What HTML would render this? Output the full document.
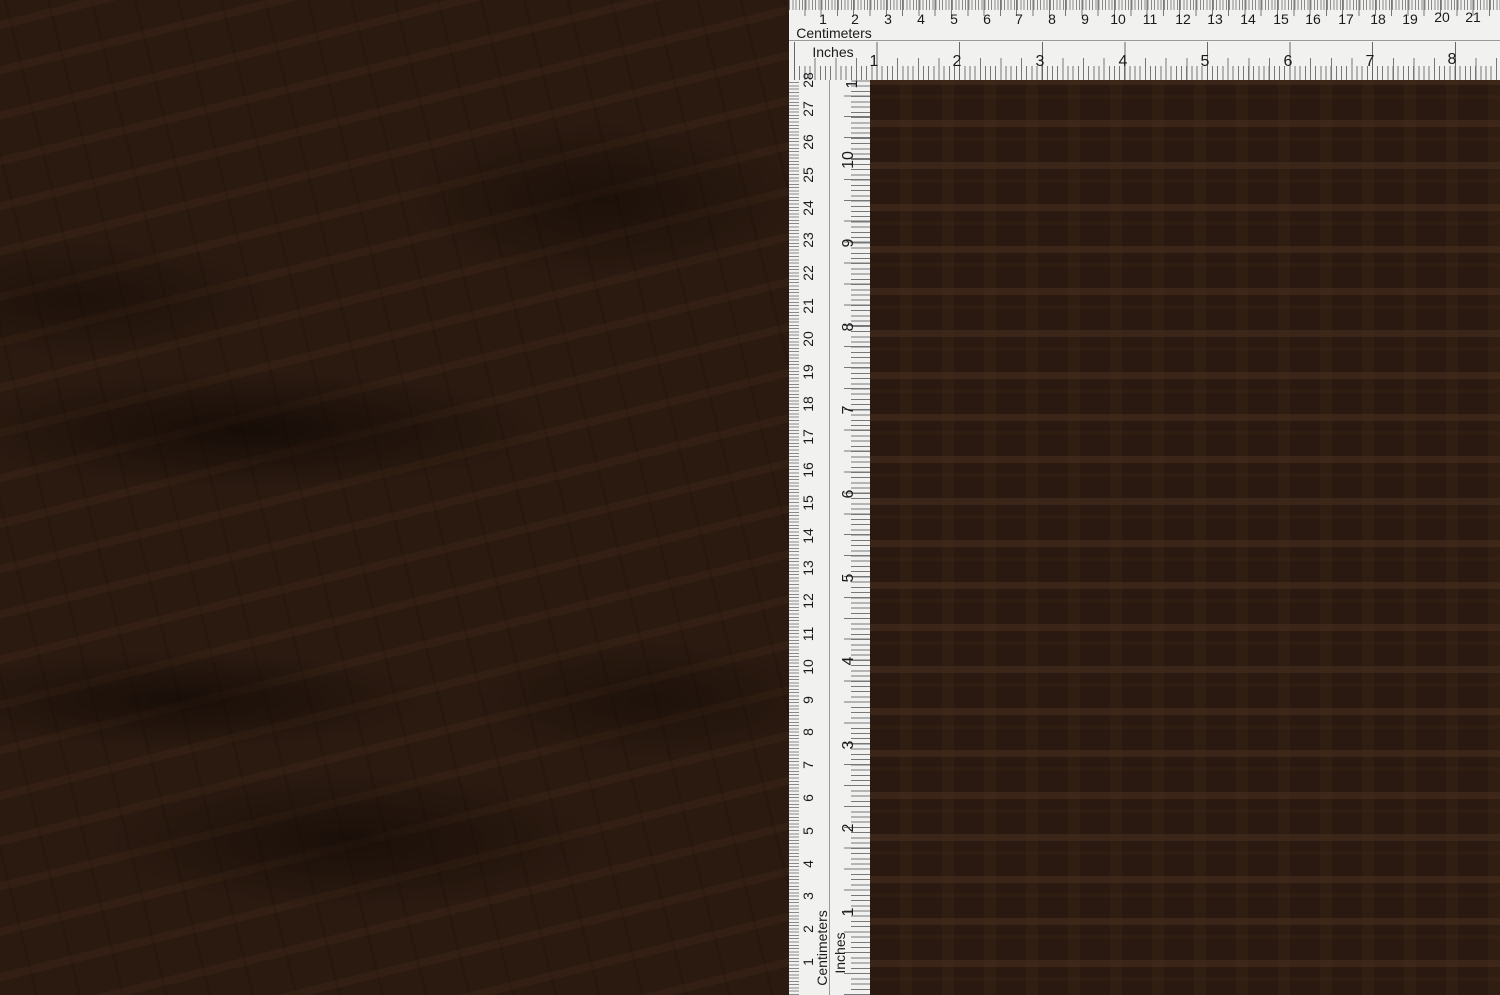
<!DOCTYPE html>
<html><head><meta charset="utf-8">
<style>
*{margin:0;padding:0;box-sizing:border-box}
html,body{width:1500px;height:995px;overflow:hidden;background:#2a1a10;font-family:"Liberation Sans",sans-serif}
#left{position:absolute;left:0;top:0;width:789px;height:995px;
background:
radial-gradient(ellipse 300px 60px at 250px 430px,rgba(10,5,2,.6),transparent),
radial-gradient(ellipse 250px 50px at 180px 700px,rgba(10,5,2,.55),transparent),
radial-gradient(ellipse 200px 80px at 600px 200px,rgba(10,5,2,.45),transparent),
radial-gradient(ellipse 250px 70px at 350px 840px,rgba(10,5,2,.5),transparent),
radial-gradient(ellipse 180px 60px at 650px 700px,rgba(10,5,2,.4),transparent),
radial-gradient(ellipse 200px 60px at 80px 300px,rgba(10,5,2,.4),transparent),
repeating-linear-gradient(-14deg,transparent 0 28px,rgba(80,50,30,.22) 28px 36px,transparent 36px 44px),
repeating-linear-gradient(76deg,transparent 0 34px,rgba(15,8,4,.15) 34px 37px,transparent 37px 42px),
#2b1a10}
#right{position:absolute;left:870px;top:80px;width:630px;height:915px;
background:
repeating-linear-gradient(90deg,transparent 0 30px,rgba(70,45,28,.25) 30px 42px),
repeating-linear-gradient(0deg,#2a1910 0 28px,#3a2518 28px 35px,#2a1910 35px 42px)}
#right:after{content:"";position:absolute;inset:0;background:repeating-linear-gradient(0deg,transparent 0 14px,rgba(60,38,24,.3) 14px 18px,transparent 18px 42px)}
.ruler{position:absolute;background:#f1f1f0}
#top{left:789px;top:0;width:711px;height:80px}
#vert{left:789px;top:80px;width:81px;height:915px}
.tick{position:absolute}
.l{position:absolute;font-size:16px;color:#1a1a1a;transform:translate(-50%,-50%);white-space:nowrap;line-height:1}
.s{font-size:14px}
.rv{transform:translate(-50%,-50%) rotate(-90deg)}
</style></head><body>
<div id="left"></div>
<div id="right"></div>
<div class="ruler" id="top">
 <div class="tick" style="left:0;top:0;width:711px;height:10px;background:repeating-linear-gradient(90deg,#8a8a8a 0 1px,transparent 1px 3.26px)"></div>
 <div class="tick" style="left:0;top:0;width:711px;height:16px;background:repeating-linear-gradient(90deg,transparent 0 15.3px,#777 15.3px 16.3px,transparent 16.3px 16.3px)"></div>
 <div class="tick" style="left:0;top:40px;width:711px;height:1px;background:#999"></div>
 <div class="tick" style="left:5px;top:66px;width:706px;height:14px;background:repeating-linear-gradient(90deg,#777 0 1px,transparent 1px 5.16px)"></div>
 <div class="tick" style="left:5px;top:58px;width:706px;height:22px;background:repeating-linear-gradient(90deg,#777 0 1px,transparent 1px 20.65px)"></div>
 <div class="tick" style="left:5px;top:42px;width:706px;height:38px;background:repeating-linear-gradient(90deg,#666 0 1px,transparent 1px 82.6px)"></div>
 <div class="l s" style="left:34px;top:19px">1</div><div class="l s" style="left:66px;top:19px">2</div><div class="l s" style="left:99px;top:19px">3</div><div class="l s" style="left:132px;top:19px">4</div><div class="l s" style="left:165px;top:19px">5</div><div class="l s" style="left:198px;top:19px">6</div><div class="l s" style="left:230px;top:19px">7</div><div class="l s" style="left:263px;top:19px">8</div><div class="l s" style="left:296px;top:19px">9</div><div class="l s" style="left:329px;top:19px">10</div><div class="l s" style="left:361px;top:19px">11</div><div class="l s" style="left:394px;top:19px">12</div><div class="l s" style="left:426px;top:19px">13</div><div class="l s" style="left:459px;top:19px">14</div><div class="l s" style="left:492px;top:19px">15</div><div class="l s" style="left:524px;top:19px">16</div><div class="l s" style="left:557px;top:19px">17</div><div class="l s" style="left:589px;top:19px">18</div><div class="l s" style="left:621px;top:19px">19</div><div class="l s" style="left:653px;top:17px">20</div><div class="l s" style="left:684px;top:17px">21</div>
 <div class="l s" style="left:45px;top:33px">Centimeters</div>
 <div class="l s" style="left:44px;top:52px">Inches</div>
 <div class="l" style="left:85px;top:62px">1</div><div class="l" style="left:168px;top:62px">2</div><div class="l" style="left:251px;top:62px">3</div><div class="l" style="left:334px;top:62px">4</div><div class="l" style="left:416px;top:62px">5</div><div class="l" style="left:499px;top:62px">6</div><div class="l" style="left:581px;top:62px">7</div><div class="l" style="left:663px;top:60px">8</div>
</div>
<div class="ruler" id="vert">
 <div class="tick" style="left:0;top:0;width:10px;height:915px;background:repeating-linear-gradient(0deg,#8a8a8a 0 1px,transparent 1px 3.28px)"></div>
 <div class="tick" style="left:40px;top:0;width:1px;height:915px;background:#999"></div>
 <div class="tick" style="left:62px;top:0;width:19px;height:915px;background:repeating-linear-gradient(0deg,#777 0 1px,transparent 1px 5.22px)"></div>
 <div class="tick" style="left:55px;top:0;width:26px;height:915px;background:repeating-linear-gradient(0deg,#777 0 1px,transparent 1px 20.9px)"></div>
 <div class="l s rv" style="left:19px;top:882px">1</div><div class="l s rv" style="left:19px;top:849px">2</div><div class="l s rv" style="left:19px;top:816px">3</div><div class="l s rv" style="left:19px;top:784px">4</div><div class="l s rv" style="left:19px;top:751px">5</div><div class="l s rv" style="left:19px;top:718px">6</div><div class="l s rv" style="left:19px;top:685px">7</div><div class="l s rv" style="left:19px;top:652px">8</div><div class="l s rv" style="left:19px;top:620px">9</div><div class="l s rv" style="left:19px;top:587px">10</div><div class="l s rv" style="left:19px;top:554px">11</div><div class="l s rv" style="left:19px;top:521px">12</div><div class="l s rv" style="left:19px;top:488px">13</div><div class="l s rv" style="left:19px;top:456px">14</div><div class="l s rv" style="left:19px;top:423px">15</div><div class="l s rv" style="left:19px;top:390px">16</div><div class="l s rv" style="left:19px;top:357px">17</div><div class="l s rv" style="left:19px;top:324px">18</div><div class="l s rv" style="left:19px;top:292px">19</div><div class="l s rv" style="left:19px;top:259px">20</div><div class="l s rv" style="left:19px;top:226px">21</div><div class="l s rv" style="left:19px;top:193px">22</div><div class="l s rv" style="left:19px;top:160px">23</div><div class="l s rv" style="left:19px;top:128px">24</div><div class="l s rv" style="left:19px;top:95px">25</div><div class="l s rv" style="left:19px;top:62px">26</div><div class="l s rv" style="left:19px;top:29px">27</div><div class="l s rv" style="left:19px;top:0px">28</div>
 <div class="l s rv" style="left:33px;top:868px">Centimeters</div>
 <div class="l s rv" style="left:51px;top:873px">Inches</div>
 <div class="l rv" style="left:60px;top:832px">1</div><div class="l rv" style="left:60px;top:748px">2</div><div class="l rv" style="left:60px;top:665px">3</div><div class="l rv" style="left:60px;top:581px">4</div><div class="l rv" style="left:60px;top:498px">5</div><div class="l rv" style="left:60px;top:414px">6</div><div class="l rv" style="left:60px;top:330px">7</div><div class="l rv" style="left:60px;top:247px">8</div><div class="l rv" style="left:60px;top:163px">9</div><div class="l rv" style="left:60px;top:80px">10</div><div class="l rv" style="left:64px;top:4px">1</div>
</div>
</body></html>
